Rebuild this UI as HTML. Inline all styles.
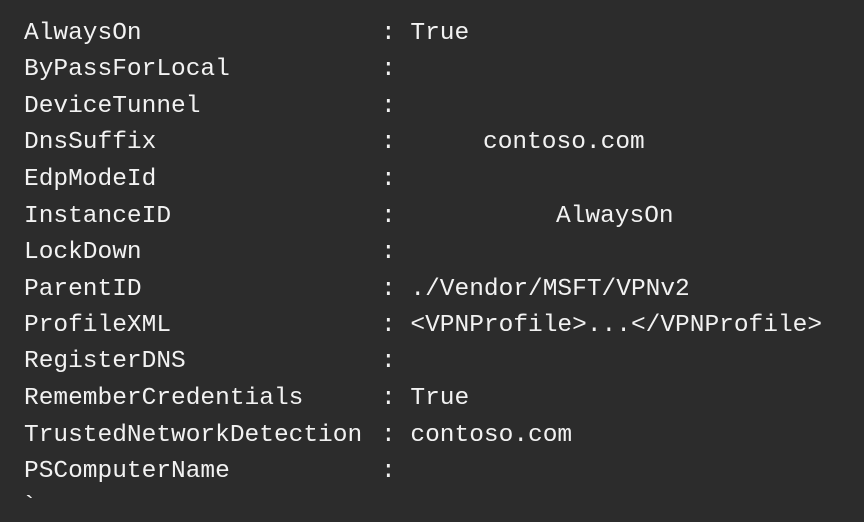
<!DOCTYPE html>
<html><head><style>
body{margin:0;background:#2c2c2c;width:864px;height:513px;overflow:hidden;position:relative;font-family:"Liberation Mono",monospace;font-size:24.5px;color:#f2f2f2}
div{position:absolute;white-space:pre;line-height:30px}
</style></head><body>
<div style="left:24px;top:19px">AlwaysOn</div><div style="left:381px;top:19px">: True</div>
<div style="left:24px;top:55px">ByPassForLocal</div><div style="left:381px;top:55px">:</div>
<div style="left:24px;top:92px">DeviceTunnel</div><div style="left:381px;top:92px">:</div>
<div style="left:24px;top:128px">DnsSuffix</div><div style="left:381px;top:128px">:</div><div style="left:483px;top:128px">contoso.com</div>
<div style="left:24px;top:165px">EdpModeId</div><div style="left:381px;top:165px">:</div>
<div style="left:24px;top:202px">InstanceID</div><div style="left:381px;top:202px">:</div><div style="left:556px;top:202px">AlwaysOn</div>
<div style="left:24px;top:238px">LockDown</div><div style="left:381px;top:238px">:</div>
<div style="left:24px;top:275px">ParentID</div><div style="left:381px;top:275px">: ./Vendor/MSFT/VPNv2</div>
<div style="left:24px;top:311px">ProfileXML</div><div style="left:381px;top:311px">: &lt;VPNProfile&gt;...&lt;/VPNProfile&gt;</div>
<div style="left:24px;top:347px">RegisterDNS</div><div style="left:381px;top:347px">:</div>
<div style="left:24px;top:384px">RememberCredentials</div><div style="left:381px;top:384px">: True</div>
<div style="left:24px;top:421px">TrustedNetworkDetection</div><div style="left:381px;top:421px">: contoso.com</div>
<div style="left:24px;top:457px">PSComputerName</div><div style="left:381px;top:457px">:</div>
<div style="left:22px;top:492px">`</div>
</body></html>
